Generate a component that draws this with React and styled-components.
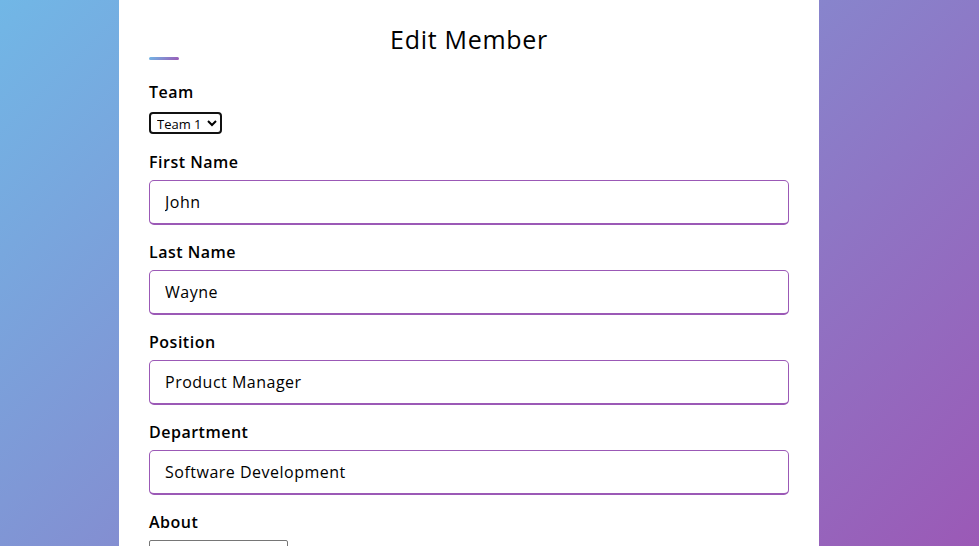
import React from 'react';
import styled, { createGlobalStyle } from 'styled-components';

const GlobalStyle = createGlobalStyle`
  * {
    box-sizing: border-box;
  }

  html,
  body {
    margin: 0;
    padding: 0;
    height: 100%;
    overflow: hidden;
  }

  body {
    font-family: 'Open Sans', 'Noto Sans', sans-serif;
    background: linear-gradient(135deg, #71b7e6, #9b59b6);
    min-height: 100vh;
  }
`;

const Page = styled.div`
  display: flex;
  padding-left: 119px;
  min-height: 100vh;
`;

const Card = styled.div`
  width: 700px;
  background: #fff;
  padding: 23px 30px 30px;
`;

const Title = styled.h2`
  position: relative;
  margin: 0;
  font-size: 25px;
  font-weight: 500;
  letter-spacing: 0.7px;
  line-height: 32px;
  color: #000;
  text-align: center;

  &::before {
    content: '';
    position: absolute;
    left: 0;
    bottom: -5px;
    width: 30px;
    height: 3px;
    border-radius: 5px;
    background: linear-gradient(135deg, #71b7e6, #9b59b6);
  }
`;

const Form = styled.form`
  display: flex;
  flex-direction: column;
  padding-top: 25px;
`;

const Field = styled.div`
  display: flex;
  flex-direction: column;
  align-items: flex-start;
  margin-bottom: ${({ compact }) => (compact ? '16px' : '15px')};
`;

const Label = styled.label`
  font-size: 16px;
  font-weight: 600;
  letter-spacing: 0.5px;
  line-height: 24px;
  color: #000;
  margin-bottom: ${({ compact }) => (compact ? '8px' : '6px')};
`;

const Select = styled.select`
  font-family: inherit;
  font-size: 13px;
  height: 22px;
  padding: 0 2px;
  border: 2px solid #111;
  border-radius: 4px;
  background: #fff;
  color: #000;
`;

const Input = styled.input`
  width: 100%;
  height: 45px;
  padding-left: 15px;
  font-family: inherit;
  font-size: 16px;
  letter-spacing: 0.5px;
  color: #000;
  border: 1px solid #9b59b6;
  border-bottom-width: 2px;
  border-radius: 5px;
  outline: none;
  background: #fff;
`;

const TextArea = styled.textarea`
  width: 139px;
  height: 60px;
  font-family: inherit;
  font-size: 13px;
  border: 1px solid #767676;
  border-radius: 2px;
  resize: both;
  overflow-y: scroll;
`;

const fields = [
  { label: 'First Name', value: 'John' },
  { label: 'Last Name', value: 'Wayne' },
  { label: 'Position', value: 'Product Manager' },
  { label: 'Department', value: 'Software Development' },
];

const App = () => {
  return (
    <>
      <GlobalStyle />
      <Page>
        <Card>
          <Title>Edit Member</Title>
          <Form onSubmit={(e) => e.preventDefault()}>
            <Field compact>
              <Label compact>Team</Label>
              <Select defaultValue='1'>
                <option value='1'>Team 1</option>
                <option value='2'>Team 2</option>
              </Select>
            </Field>
            {fields.map((f) => (
              <Field key={f.label}>
                <Label>{f.label}</Label>
                <Input type='text' defaultValue={f.value} />
              </Field>
            ))}
            <Field>
              <Label>About</Label>
              <TextArea defaultValue='Experienced product manager leading the software team.' />
            </Field>
          </Form>
        </Card>
      </Page>
    </>
  );
};

export default App;
